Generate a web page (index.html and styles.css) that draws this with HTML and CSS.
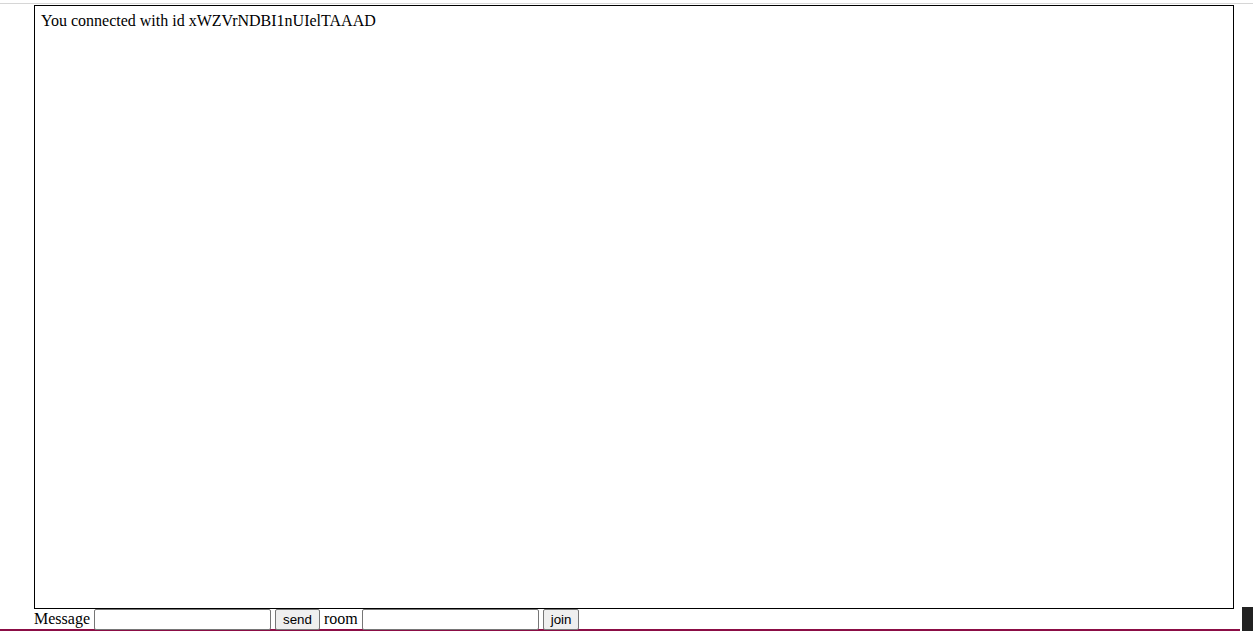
FILE: index.html
```html
<!DOCTYPE html>
<html>
<head>
<meta charset="utf-8">
<link rel="stylesheet" href="styles.css">
</head>
<body>
<div class="topline"></div>
<div class="page">
  <div class="messages">
    <div class="msg">You connected with id xWZVrNDBI1nUIelTAAAD</div>
  </div>
  <form class="controls">
    <label class="lbl">Message</label>
    <input class="field" type="text">
    <button class="btn" type="button">send</button>
    <label class="lbl">room</label>
    <input class="field" type="text">
    <button class="btn" type="button">join</button>
  </form>
</div>
<div class="bottomline"></div>
<div class="corner"></div>
</body>
</html>
```
FILE: styles.css
```css
html, body {
  margin: 0;
  padding: 0;
  background: #fff;
  font-family: "Liberation Serif", "Times New Roman", serif;
  font-size: 16px;
  color: #000;
  overflow: hidden;
}
.topline {
  height: 1px;
  margin-top: 3px;
  background: #d6d6d6;
}
.page {
  margin: 1px 0 0 34px;
}
.messages {
  box-sizing: border-box;
  width: 1200px;
  height: 604px;
  border: 1px solid #000;
  padding: 4px 6px;
}
.msg {
  line-height: 21px;
}
.controls {
  display: flex;
  align-items: center;
  height: 20px;
  margin: 0;
}
.lbl {
  margin-right: 4px;
  line-height: 20px;
}
.field {
  box-sizing: border-box;
  width: 177px;
  height: 21px;
  margin: 1px 4px 0 0;
  border: 1px solid #767676;
  border-radius: 2px;
  padding: 1px 2px;
  font-size: 13.33px;
}
.btn {
  box-sizing: border-box;
  height: 21px;
  margin: 1px 4px 0 0;
  padding: 1px 7px;
  border: 1px solid #767676;
  border-radius: 2px;
  background: #efefef;
  font-family: "Liberation Sans", Arial, sans-serif;
  font-size: 13.33px;
  color: #000;
}
.bottomline {
  height: 2px;
  width: 1240px;
  background: #8b0d45;
}
.corner {
  position: absolute;
  right: 0;
  bottom: 0;
  width: 11px;
  height: 24px;
  background: #222;
}
```
